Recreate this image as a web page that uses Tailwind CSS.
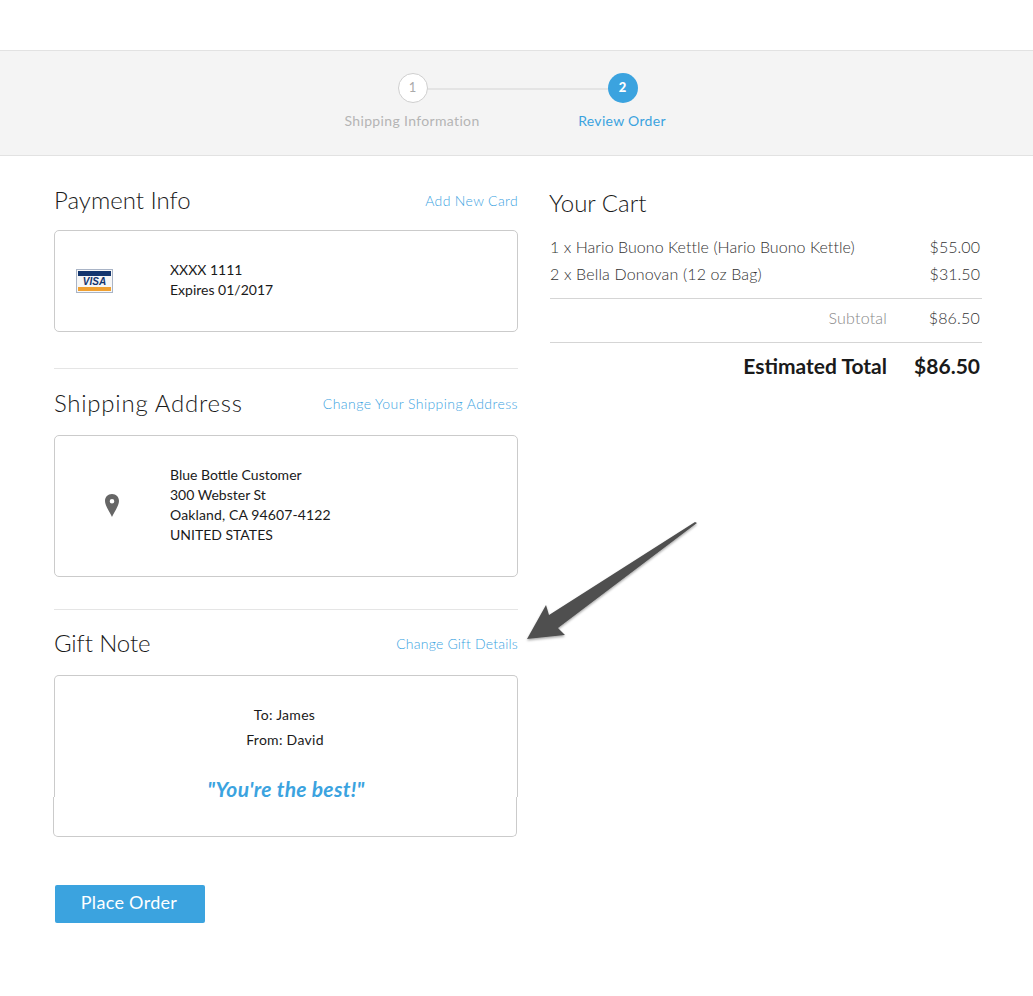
<!DOCTYPE html>
<html lang="en">
<head>
  <meta charset="utf-8" />
  <title>Review Order</title>
  <script src="https://cdn.jsdelivr.net/npm/@tailwindcss/browser@4"></script>
</head>
<body class="relative bg-white font-['Lato','Liberation_Sans',sans-serif] text-[#1a1a1a] h-[996px] overflow-hidden">
  <!-- Steps -->
  <div class="mt-[50px] h-[106px] bg-[#f4f4f4] border-y border-[#e2e2e2] flex justify-center">
    <div class="relative w-[210px] h-full ml-[3px]">
      <div class="absolute left-0 right-0 top-[37px] h-[2px] bg-[#e4e4e4]"></div>
      <div class="absolute left-[-15px] top-[22px] w-[30px] h-[30px] rounded-full bg-white border border-[#cfcfcf] flex items-center justify-center pr-px text-[13px] text-[#aaa]">1</div>
      <div class="absolute left-[-71px] top-[59px] w-[140px] text-center text-[14px] tracking-[0.35px] text-[#b5b5b5] whitespace-nowrap">Shipping Information</div>
      <div class="absolute left-[195px] top-[22px] w-[30px] h-[30px] rounded-full bg-[#3ba3df] flex items-center justify-center pr-px pb-px text-[13px] font-black text-white">2</div>
      <div class="absolute left-[139px] top-[59px] w-[140px] text-center text-[14px] tracking-[0.3px] text-[#3ba3df] whitespace-nowrap">Review Order</div>
    </div>
  </div>

  <div class="flex pl-[54px] pr-[51px]">
    <!-- Left column -->
    <div class="w-[464px]">
      <div class="flex items-center justify-between h-[30px] mt-[29px]">
        <h2 class="text-[24px] font-light tracking-[0px]">Payment Info</h2>
        <a class="-ml-px text-[14px] font-light tracking-[0.35px] text-[#3ba3df]">Add New Card</a>
      </div>
      <div class="mt-[15px] h-[102px] border border-[#cbcbcb] rounded-[5px] flex items-center">
        <div class="w-[115px] pl-[21px]">
          <svg class="block" width="37" height="24" viewBox="0 0 37 24">
            <rect x="0.5" y="0.5" width="36" height="23" fill="#f7f7f7" stroke="#a9b4c6"/>
            <rect x="2" y="2" width="33" height="5" fill="#13356e"/>
            <rect x="2" y="18" width="33" height="4" fill="#f0a030"/>
            <text x="18.5" y="16" text-anchor="middle" font-family="Liberation Sans" font-size="10" font-weight="700" font-style="italic" fill="#13356e">VISA</text>
          </svg>
        </div>
        <div class="text-[14px] leading-[20px] pb-[2px]">
          <p>XXXX 1111</p>
          <p>Expires 01/2017</p>
        </div>
      </div>

      <div class="mt-[36px] border-t border-[#e5e5e5] pt-[18px] flex items-center justify-between h-[51px]">
        <h2 class="text-[24px] font-light tracking-[0.75px]">Shipping Address</h2>
        <a class="text-[14px] font-light tracking-[0.43px] text-[#3ba3df]">Change Your Shipping Address</a>
      </div>
      <div class="mt-[16px] h-[142px] border border-[#cbcbcb] rounded-[5px] flex items-center">
        <div class="w-[115px] flex justify-center pr-[2px]">
          <svg width="16" height="26" viewBox="0 0 16 26">
            <path fill="#666" fill-rule="evenodd" d="M8 1C3.800 1 1 4 1 8c0 4.500 4.600 11 7 16 2.400-5 7-11.500 7-16 0-4-2.800-7-7-7zm0 5a2.300 2.300 0 1 1 0 4.600A2.300 2.300 0 0 1 8 6z"/>
          </svg>
        </div>
        <div class="text-[14px] leading-[20px] pb-[2px]">
          <p>Blue Bottle Customer</p>
          <p>300 Webster St</p>
          <p class="tracking-[0.13px]">Oakland, CA 94607-4122</p>
          <p>UNITED STATES</p>
        </div>
      </div>

      <div class="mt-[32px] border-t border-[#e5e5e5] pt-[18px] flex items-center justify-between h-[49px]">
        <h2 class="text-[24px] font-light tracking-[-0.1px]">Gift Note</h2>
        <a class="text-[14px] font-light tracking-[0.2px] text-[#3ba3df]">Change Gift Details</a>
      </div>
      <div class="mt-[17px]">
        <div class="h-[122px] border-x border-t border-[#cbcbcb] rounded-t-[5px] pt-[26px] text-center text-[14px] tracking-[0.3px]">
          <p class="leading-[25px] pr-[3px]">To: James</p>
          <p class="leading-[25px] pr-[2px]">From: David</p>
          <p class="mt-[22px] text-[21px] leading-[30px] font-bold italic tracking-[0.3px] text-[#3ba3df]">"You're the best!"</p>
        </div>
        <div class="-ml-px w-[464px] h-[40px] border-x border-b border-[#cbcbcb] rounded-b-[5px]"></div>
      </div>

      <button class="mt-[48px] ml-px w-[150px] h-[38px] rounded-[2px] bg-[#3ba3df] text-white text-[18px] tracking-[0.3px] pb-[3px] pr-[2px]">Place Order</button>
    </div>

    <!-- Cart -->
    <div class="ml-[32px] flex-1">
      <h2 class="mt-[32px] -ml-px h-[30px] leading-[30px] text-[24px] font-light">Your Cart</h2>
      <div class="mt-[15px] text-[16px] font-light text-[#333] tracking-[0.05px]">
        <div class="flex justify-between h-[27px] items-center pr-[2px]"><span>1 x Hario Buono Kettle (Hario Buono Kettle)</span><span>$55.00</span></div>
        <div class="flex justify-between h-[27px] items-center pr-[2px]"><span class="tracking-[0.15px]">2 x Bella Donovan (12 oz Bag)</span><span>$31.50</span></div>
      </div>
      <div class="mt-[11px] border-t border-[#d5d5d5] h-[44px] pb-[6px] flex items-center justify-end pr-[2px] text-[16px] font-light tracking-[0.2px] text-[#333]">
        <span class="text-[#888]">Subtotal</span><span class="w-[93px] text-right">$86.50</span>
      </div>
      <div class="border-t border-[#d5d5d5] h-[46px] flex items-center justify-end pr-[2px] text-[21px] font-bold">
        <span>Estimated Total</span><span class="w-[93px] text-right">$86.50</span>
      </div>
    </div>
  </div>

  <!-- Arrow annotation -->
  <svg class="absolute left-[520px] top-[515px]" width="185" height="135" viewBox="520 515 185 135">
    <defs><filter id="arrowShadow" x="-10%" y="-10%" width="120%" height="120%"><feDropShadow dx="0" dy="1.500" stdDeviation="1.200" flood-color="#000" flood-opacity="0.35"/></filter></defs>
    <polygon points="697,523 695,522 549,615 546,605 527,639 565,635 558,628" fill="#505050" filter="url(#arrowShadow)"/>
  </svg>
</body>
</html>
